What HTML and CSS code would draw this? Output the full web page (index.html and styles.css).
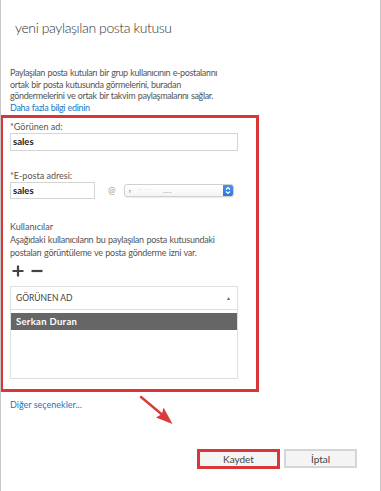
FILE: index.html
```html
<!DOCTYPE html>
<html lang="tr">
<head>
<meta charset="utf-8">
<link rel="stylesheet" href="styles.css">
</head>
<body>
<div class="dialog">
  <h1 class="title">yeni paylaşılan posta kutusu</h1>
  <p class="intro">Paylaşılan posta kutuları bir grup kullanıcının e-postalarını<br>ortak bir posta kutusunda görmelerini, buradan<br>göndermelerini ve ortak bir takvim paylaşmalarını sağlar.<br><a class="link">Daha fazla bilgi edinin</a></p>

  <section class="highlight">
    <div class="label">*Görünen ad:</div>
    <div class="input wide">sales</div>

    <div class="label second">*E-posta adresi:</div>
    <div class="email-row">
      <div class="input short">sales</div>
      <span class="at">@</span>
      <div class="select">
        <span class="blur"><span class="mark">r</span>&nbsp;&nbsp;&nbsp;&nbsp;˙˙&nbsp;˙˙˙&nbsp;&nbsp;&nbsp;&nbsp;&nbsp;&nbsp;&nbsp;&nbsp;<span class="dots">......</span></span>
        <span class="spin"><svg width="6" height="9" viewBox="0 0 6 9"><path d="M1 3.5 L3 1.5 L5 3.5 M1 5.5 L3 7.5 L5 5.5" fill="none" stroke="#fff" stroke-width="1.2"/></svg></span>
      </div>
    </div>

    <div class="users-title">Kullanıcılar</div>
    <p class="users-desc">Aşağıdaki kullanıcıların bu paylaşılan posta kutusundaki<br>postaları görüntüleme ve posta gönderme izni var.</p>

    <div class="tools">
      <svg width="12" height="12" viewBox="0 0 12 12"><path d="M6 0.5 V11.5 M0.5 6 H11.5" stroke="#444" stroke-width="2.2"/></svg>
      <svg width="12" height="12" viewBox="0 0 12 12"><path d="M0.5 6 H11.5" stroke="#444" stroke-width="2.2"/></svg>
    </div>

    <div class="table">
      <div class="thead"><span>GÖRÜNEN AD</span><span class="sort">▲</span></div>
      <div class="tbody">
        <div class="row selected">Serkan Duran</div>
      </div>
    </div>
  </section>

  <a class="more">Diğer seçenekler...</a>

  <div class="actions">
    <button class="btn save">Kaydet</button>
    <button class="btn cancel">İptal</button>
  </div>

  <svg class="arrow" width="381" height="491" viewBox="0 0 381 491">
    <path d="M141 397 L165 417" stroke="#d93a3a" stroke-width="2.4" stroke-linecap="round"/>
    <path d="M172.5 424 L156 417.5 L162 414 L163.5 407.5 Z" fill="#d93a3a"/>
  </svg>
</div>
</body>
</html>
```

FILE: styles.css
```css
* { box-sizing: border-box; }

html, body {
  margin: 0;
  padding: 0;
  background: #fff;
}

body {
  font-family: "Lato", "Open Sans", "Liberation Sans", sans-serif;
  color: #444;
}

.dialog {
  position: relative;
  width: 381px;
  height: 491px;
  border-left: 1px solid #c6c6c6;
  border-right: 1px solid #c6c6c6;
  overflow: hidden;
}

.dialog::before,
.dialog::after {
  content: "";
  position: absolute;
  top: 0;
  width: 1px;
  height: 12px;
  background: #333;
}
.dialog::before { left: -1px; }
.dialog::after { right: -1px; }

.title {
  margin: 0;
  padding: 18px 0 0 14px;
  font-size: 14px;
  letter-spacing: -0.4px;
  line-height: 20px;
  font-weight: 300;
  color: #333;
}

.intro {
  margin: 29px 0 0;
  padding-left: 9px;
  font-size: 9px;
  letter-spacing: -0.35px;
  word-spacing: 0.5px;
  line-height: 11.5px;
  color: #555;
}

.link, .more {
  color: #1a78c2;
  text-decoration: none;
}

.highlight {
  margin: 2px 0 0 -1px;
  width: 259px;
  border: 3px solid #d9363a;
  padding: 3px 0 10px 7px;
}

.label {
  font-size: 9px;
  line-height: 12px;
  color: #555;
}
.label.second { margin-top: 19px; }

.input {
  height: 18px;
  border: 1px solid #d4d4d4;
  font-size: 9.5px;
  font-weight: 700;
  line-height: 16px;
  color: #222;
  padding-left: 2px;
}
.input.wide { width: 228px; }
.input.short { width: 85px; height: 17px; line-height: 15px; }

.email-row {
  display: flex;
  align-items: center;
}

.at {
  margin-left: 13px;
  width: 13px;
  font-size: 9px;
  color: #999;
}

.select {
  margin-left: 3px;
  width: 110px;
  height: 13px;
  border: 1px solid #d0d0d0;
  border-radius: 3px;
  background: linear-gradient(#fff, #f4f4f4);
  box-shadow: 0 1px 1px rgba(0,0,0,0.08);
  display: flex;
  align-items: center;
  justify-content: space-between;
  overflow: hidden;
}

.blur {
  font-size: 6px;
  color: #bbb;
  padding-left: 4px;
  white-space: nowrap;
}
.blur .mark { color: #777; }
.blur .dots { color: #888; }

.spin {
  width: 10px;
  height: 13px;
  background: linear-gradient(#4a95ee, #2c74d6);
  border-radius: 0 3px 3px 0;
  display: flex;
  align-items: center;
  justify-content: center;
}

.users-title {
  margin-top: 22px;
  font-size: 9px;
  line-height: 12px;
  color: #555;
}

.users-desc {
  margin: 1px 0 0;
  font-size: 9px;
  letter-spacing: -0.25px;
  word-spacing: 0.5px;
  line-height: 12.5px;
  color: #555;
}

.tools {
  margin-top: 6px;
  height: 12px;
  display: flex;
  gap: 7px;
  padding-left: 2px;
}

.table {
  margin-top: 9px;
  width: 228px;
  height: 93px;
  border: 1px solid #dde0e0;
  display: flex;
  flex-direction: column;
}

.thead {
  height: 23px;
  border-bottom: 1px solid #dde0e0;
  display: flex;
  align-items: center;
  justify-content: space-between;
  padding: 0 6px 0 5px;
  font-size: 8.5px;
  color: #444;
}

.sort {
  font-size: 5px;
  color: #666;
}

.tbody {
  flex: 1;
  padding-top: 3px;
}

.row.selected {
  height: 17px;
  background: #666;
  color: #fff;
  font-size: 9.5px;
  font-weight: 700;
  letter-spacing: 0.3px;
  line-height: 17px;
  padding-left: 5px;
}

.more {
  display: block;
  margin: 7px 0 0 9px;
  font-size: 9px;
  line-height: 12px;
}

.actions {
  margin-top: 38px;
  display: flex;
  justify-content: flex-end;
  align-items: flex-start;
  gap: 4px;
  padding-right: 23px;
}

.btn {
  font-family: inherit;
  font-size: 10px;
  color: #444;
  background: #f4f4f4;
  padding: 0;
  margin: 0;
}

.btn.save {
  width: 83px;
  height: 20px;
  border: 3px solid #d9363a;
}

.btn.cancel {
  width: 73px;
  height: 19px;
  border: 2px solid #d2d6d6;
}

.arrow {
  position: absolute;
  left: -1px;
  top: 0;
  pointer-events: none;
}
```
